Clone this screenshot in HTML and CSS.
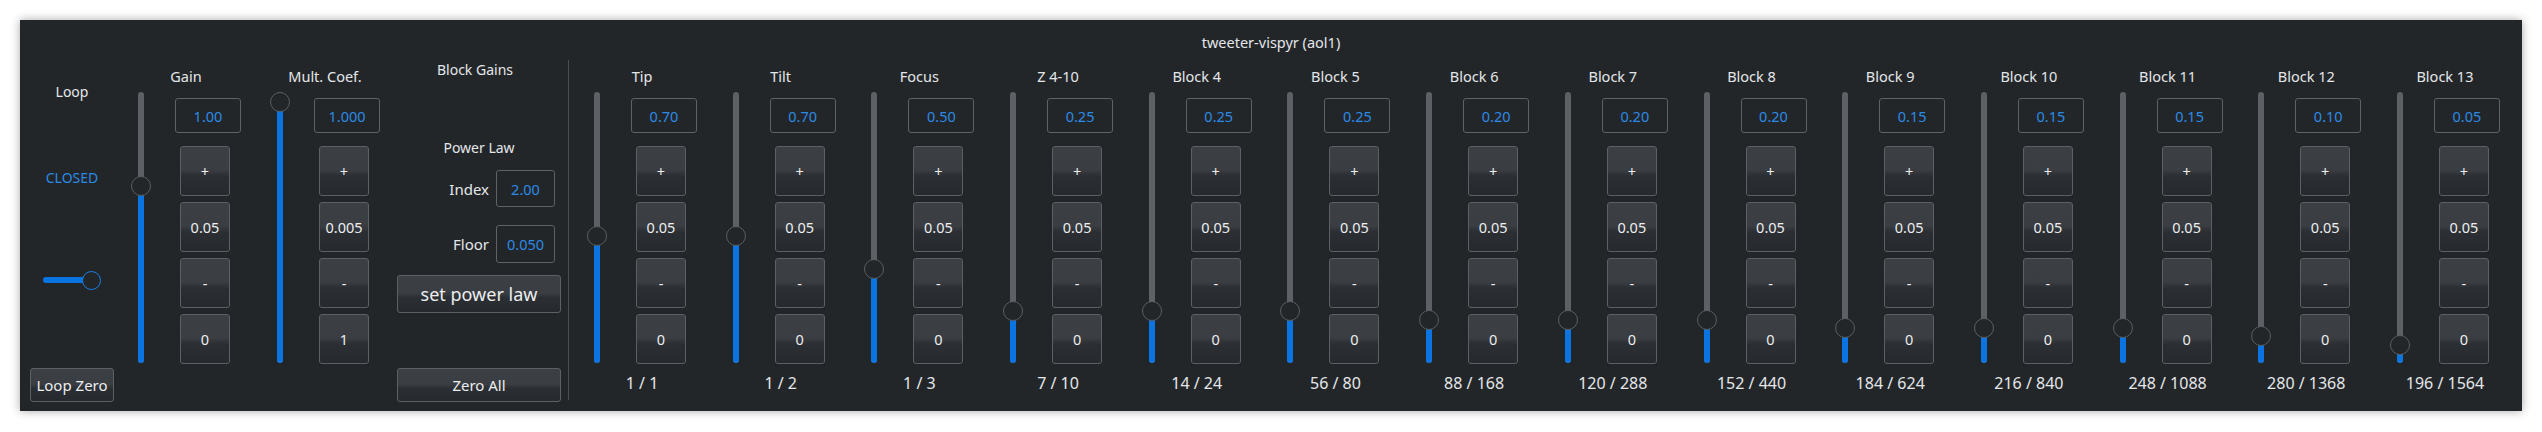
FILE: index.html
```html
<!DOCTYPE html>
<html>
<head>
<meta charset="utf-8">
<link rel="stylesheet" href="styles.css">
</head>
<body>
<div class="window">
  <div class="title">tweeter-vispyr (aol1)</div>
  <div class="main">
    <div class="loop-col">
      <div class="loop-label">Loop</div>
      <div class="loop-state">CLOSED</div>
      <div class="toggle"><div class="toggle-groove"></div><div class="toggle-knob"></div></div>
      <div class="btn loop-zero">Loop Zero</div>
    </div>

    <div class="chan">
      <div class="chan-label">Gain</div>
      <div class="chan-body">
        <div class="vslider" style="--p:0.6667"><div class="fill"></div><div class="knob"></div></div>
        <div class="controls"><div class="valbox">1.00</div><div class="btn sq">+</div><div class="btn sq">0.05</div><div class="btn sq">-</div><div class="btn sq">0</div></div>
      </div>
      <div class="chan-count"></div>
    </div>

    <div class="chan">
      <div class="chan-label">Mult. Coef.</div>
      <div class="chan-body">
        <div class="vslider" style="--p:1"><div class="fill"></div><div class="knob"></div></div>
        <div class="controls"><div class="valbox">1.000</div><div class="btn sq">+</div><div class="btn sq">0.005</div><div class="btn sq">-</div><div class="btn sq">1</div></div>
      </div>
      <div class="chan-count"></div>
    </div>

    <div class="block-gains">
      <div class="bg-title">Block Gains</div>
      <div class="pl-title">Power Law</div>
      <div class="field index-row"><span class="field-label">Index</span><div class="valbox small">2.00</div></div>
      <div class="field floor-row"><span class="field-label">Floor</span><div class="valbox small tall">0.050</div></div>
      <div class="btn wide big">set power law</div>
      <div class="btn wide zero-all">Zero All</div>
    </div>

    <div class="sep"></div>

    <div class="chans">
      <div class="chan">
        <div class="chan-label">Tip</div>
        <div class="chan-body">
          <div class="vslider" style="--p:0.4667"><div class="fill"></div><div class="knob"></div></div>
          <div class="controls"><div class="valbox">0.70</div><div class="btn sq">+</div><div class="btn sq">0.05</div><div class="btn sq">-</div><div class="btn sq">0</div></div>
        </div>
        <div class="chan-count">1 / 1</div>
      </div>
      <div class="chan">
        <div class="chan-label">Tilt</div>
        <div class="chan-body">
          <div class="vslider" style="--p:0.4667"><div class="fill"></div><div class="knob"></div></div>
          <div class="controls"><div class="valbox">0.70</div><div class="btn sq">+</div><div class="btn sq">0.05</div><div class="btn sq">-</div><div class="btn sq">0</div></div>
        </div>
        <div class="chan-count">1 / 2</div>
      </div>
      <div class="chan">
        <div class="chan-label">Focus</div>
        <div class="chan-body">
          <div class="vslider" style="--p:0.3333"><div class="fill"></div><div class="knob"></div></div>
          <div class="controls"><div class="valbox">0.50</div><div class="btn sq">+</div><div class="btn sq">0.05</div><div class="btn sq">-</div><div class="btn sq">0</div></div>
        </div>
        <div class="chan-count">1 / 3</div>
      </div>
      <div class="chan">
        <div class="chan-label">Z 4-10</div>
        <div class="chan-body">
          <div class="vslider" style="--p:0.1667"><div class="fill"></div><div class="knob"></div></div>
          <div class="controls"><div class="valbox">0.25</div><div class="btn sq">+</div><div class="btn sq">0.05</div><div class="btn sq">-</div><div class="btn sq">0</div></div>
        </div>
        <div class="chan-count">7 / 10</div>
      </div>
      <div class="chan">
        <div class="chan-label">Block 4</div>
        <div class="chan-body">
          <div class="vslider" style="--p:0.1667"><div class="fill"></div><div class="knob"></div></div>
          <div class="controls"><div class="valbox">0.25</div><div class="btn sq">+</div><div class="btn sq">0.05</div><div class="btn sq">-</div><div class="btn sq">0</div></div>
        </div>
        <div class="chan-count">14 / 24</div>
      </div>
      <div class="chan">
        <div class="chan-label">Block 5</div>
        <div class="chan-body">
          <div class="vslider" style="--p:0.1667"><div class="fill"></div><div class="knob"></div></div>
          <div class="controls"><div class="valbox">0.25</div><div class="btn sq">+</div><div class="btn sq">0.05</div><div class="btn sq">-</div><div class="btn sq">0</div></div>
        </div>
        <div class="chan-count">56 / 80</div>
      </div>
      <div class="chan">
        <div class="chan-label">Block 6</div>
        <div class="chan-body">
          <div class="vslider" style="--p:0.1333"><div class="fill"></div><div class="knob"></div></div>
          <div class="controls"><div class="valbox">0.20</div><div class="btn sq">+</div><div class="btn sq">0.05</div><div class="btn sq">-</div><div class="btn sq">0</div></div>
        </div>
        <div class="chan-count">88 / 168</div>
      </div>
      <div class="chan">
        <div class="chan-label">Block 7</div>
        <div class="chan-body">
          <div class="vslider" style="--p:0.1333"><div class="fill"></div><div class="knob"></div></div>
          <div class="controls"><div class="valbox">0.20</div><div class="btn sq">+</div><div class="btn sq">0.05</div><div class="btn sq">-</div><div class="btn sq">0</div></div>
        </div>
        <div class="chan-count">120 / 288</div>
      </div>
      <div class="chan">
        <div class="chan-label">Block 8</div>
        <div class="chan-body">
          <div class="vslider" style="--p:0.1333"><div class="fill"></div><div class="knob"></div></div>
          <div class="controls"><div class="valbox">0.20</div><div class="btn sq">+</div><div class="btn sq">0.05</div><div class="btn sq">-</div><div class="btn sq">0</div></div>
        </div>
        <div class="chan-count">152 / 440</div>
      </div>
      <div class="chan">
        <div class="chan-label">Block 9</div>
        <div class="chan-body">
          <div class="vslider" style="--p:0.1"><div class="fill"></div><div class="knob"></div></div>
          <div class="controls"><div class="valbox">0.15</div><div class="btn sq">+</div><div class="btn sq">0.05</div><div class="btn sq">-</div><div class="btn sq">0</div></div>
        </div>
        <div class="chan-count">184 / 624</div>
      </div>
      <div class="chan">
        <div class="chan-label">Block 10</div>
        <div class="chan-body">
          <div class="vslider" style="--p:0.1"><div class="fill"></div><div class="knob"></div></div>
          <div class="controls"><div class="valbox">0.15</div><div class="btn sq">+</div><div class="btn sq">0.05</div><div class="btn sq">-</div><div class="btn sq">0</div></div>
        </div>
        <div class="chan-count">216 / 840</div>
      </div>
      <div class="chan">
        <div class="chan-label">Block 11</div>
        <div class="chan-body">
          <div class="vslider" style="--p:0.1"><div class="fill"></div><div class="knob"></div></div>
          <div class="controls"><div class="valbox">0.15</div><div class="btn sq">+</div><div class="btn sq">0.05</div><div class="btn sq">-</div><div class="btn sq">0</div></div>
        </div>
        <div class="chan-count">248 / 1088</div>
      </div>
      <div class="chan">
        <div class="chan-label">Block 12</div>
        <div class="chan-body">
          <div class="vslider" style="--p:0.0667"><div class="fill"></div><div class="knob"></div></div>
          <div class="controls"><div class="valbox">0.10</div><div class="btn sq">+</div><div class="btn sq">0.05</div><div class="btn sq">-</div><div class="btn sq">0</div></div>
        </div>
        <div class="chan-count">280 / 1368</div>
      </div>
      <div class="chan">
        <div class="chan-label">Block 13</div>
        <div class="chan-body">
          <div class="vslider" style="--p:0.0333"><div class="fill"></div><div class="knob"></div></div>
          <div class="controls"><div class="valbox">0.05</div><div class="btn sq">+</div><div class="btn sq">0.05</div><div class="btn sq">-</div><div class="btn sq">0</div></div>
        </div>
        <div class="chan-count">196 / 1564</div>
      </div>
    </div>
  </div>
</div>
</body>
</html>
```

FILE: styles.css
```css
* { box-sizing: border-box; }
html, body { margin: 0; padding: 0; }
body {
  background: #ffffff;
  width: 2542px;
  height: 432px;
  padding: 20px 0 0 20px;
  font-family: "Noto Sans", "DejaVu Sans", sans-serif;
  font-size: 14px;
  color: #e4e6e9;
  overflow: hidden;
}
.window {
  width: 2502px;
  height: 391px;
  background: #232629;
  box-shadow: 0 0 9px rgba(0, 0, 0, 0.35);
  padding: 12px 0 0 10px;
}
.title {
  height: 20px;
  line-height: 20px;
  text-align: center;
  font-size: 14.5px;
  padding-right: 10px;
}
.main {
  margin-top: 14px;
  display: flex;
  align-items: flex-start;
}

/* loop column */
.loop-col {
  width: 84px;
  display: flex;
  flex-direction: column;
  align-items: center;
  margin-right: 3px;
}
.loop-label { margin-top: 16px; height: 20px; line-height: 20px; }
.loop-state { margin-top: 66px; height: 20px; line-height: 20px; color: #2b8ae6; }
.toggle {
  margin-top: 82px;
  width: 58px;
  height: 20px;
  position: relative;
}
.toggle-groove {
  position: absolute;
  left: 0;
  top: 7px;
  width: 48px;
  height: 6px;
  border-radius: 3px;
  background: #0a74e2;
}
.toggle-knob {
  position: absolute;
  right: 0;
  top: 1px;
  width: 19px;
  height: 19px;
  border-radius: 50%;
  background: #232629;
  border: 1px solid #1b7ee0;
}
.loop-zero {
  margin-top: 78px;
  width: 84px;
  height: 34px;
  font-size: 15px;
}

/* buttons */
.btn {
  display: flex;
  align-items: center;
  justify-content: center;
  border: 1px solid #5c5f63;
  border-radius: 3px;
  color: #eceef0;
  background: linear-gradient(#3c3f43 0%, #3a3d41 48%, #2b2e32 60%, #26292d 100%);
}
.sq {
  width: 50px;
  height: 50px;
  margin-left: 5px;
  margin-top: 6px;
  font-size: 14.5px;
}
.valbox + .sq { margin-top: 13px; }
.valbox {
  width: 66px;
  height: 35px;
  margin-top: 6px;
  border: 1px solid #5e6165;
  border-radius: 3px;
  display: flex;
  align-items: center;
  justify-content: center;
  color: #2b8ae6;
  font-size: 14.5px;
}

/* channel */
.chan {
  width: 124px;
  flex: none;
  display: flex;
  flex-direction: column;
}
.chan + .chan { margin-left: 15px; }
.chans .chan + .chan { margin-left: 14.7px; }
.chan-label {
  height: 20px;
  line-height: 20px;
  text-align: center;
  padding-left: 14px;
  white-space: nowrap;
  font-size: 14.5px;
}
.chan-body {
  margin-top: 6px;
  display: flex;
  gap: 10px;
}
.vslider {
  width: 48px;
  height: 271px;
  position: relative;
  flex: none;
}
.vslider::before {
  content: "";
  position: absolute;
  left: 21px;
  top: 0;
  width: 6px;
  height: 271px;
  border-radius: 3px;
  background: #5d6064;
}
.vslider .fill {
  position: absolute;
  left: 21px;
  bottom: 0;
  width: 6px;
  height: calc(261px - (1 - var(--p)) * 251px);
  border-radius: 3px;
  background: #0a74e2;
}
.vslider .knob {
  position: absolute;
  left: 14px;
  top: calc((1 - var(--p)) * 251px);
  width: 20px;
  height: 20px;
  border-radius: 50%;
  background: #232629;
  border: 1px solid #5a5d61;
}
.controls {
  width: 66px;
  display: flex;
  flex-direction: column;
}
.chan-count {
  margin-top: 8px;
  height: 22px;
  line-height: 22px;
  text-align: center;
  padding-left: 14px;
  font-size: 16px;
  white-space: nowrap;
}

/* block gains */
.block-gains {
  width: 164px;
  margin-left: 17px;
  display: flex;
  flex-direction: column;
  align-items: stretch;
}
.bg-title {
  margin-top: -6px;
  height: 20px;
  line-height: 20px;
  text-align: center;
  padding-right: 8px;
}
.pl-title {
  margin-top: 58px;
  height: 20px;
  line-height: 20px;
  text-align: center;
}
.field {
  display: flex;
  justify-content: flex-end;
  align-items: center;
  padding-right: 6px;
  gap: 7px;
  font-size: 15px;
}
.index-row { margin-top: 12px; }
.floor-row { margin-top: 18px; }
.valbox.small { width: 59px; height: 37px; margin-top: 0; }
.valbox.small.tall { height: 38px; }
.wide { width: 164px; }
.big { margin-top: 12px; height: 38px; font-size: 18px; }
.zero-all { margin-top: 55px; height: 34px; font-size: 15px; }

.sep {
  width: 1px;
  height: 340px;
  margin-top: -6px;
  margin-left: 7px;
  margin-right: 4px;
  background: #4a4d51;
  flex: none;
}
.chans {
  display: flex;
}
```
